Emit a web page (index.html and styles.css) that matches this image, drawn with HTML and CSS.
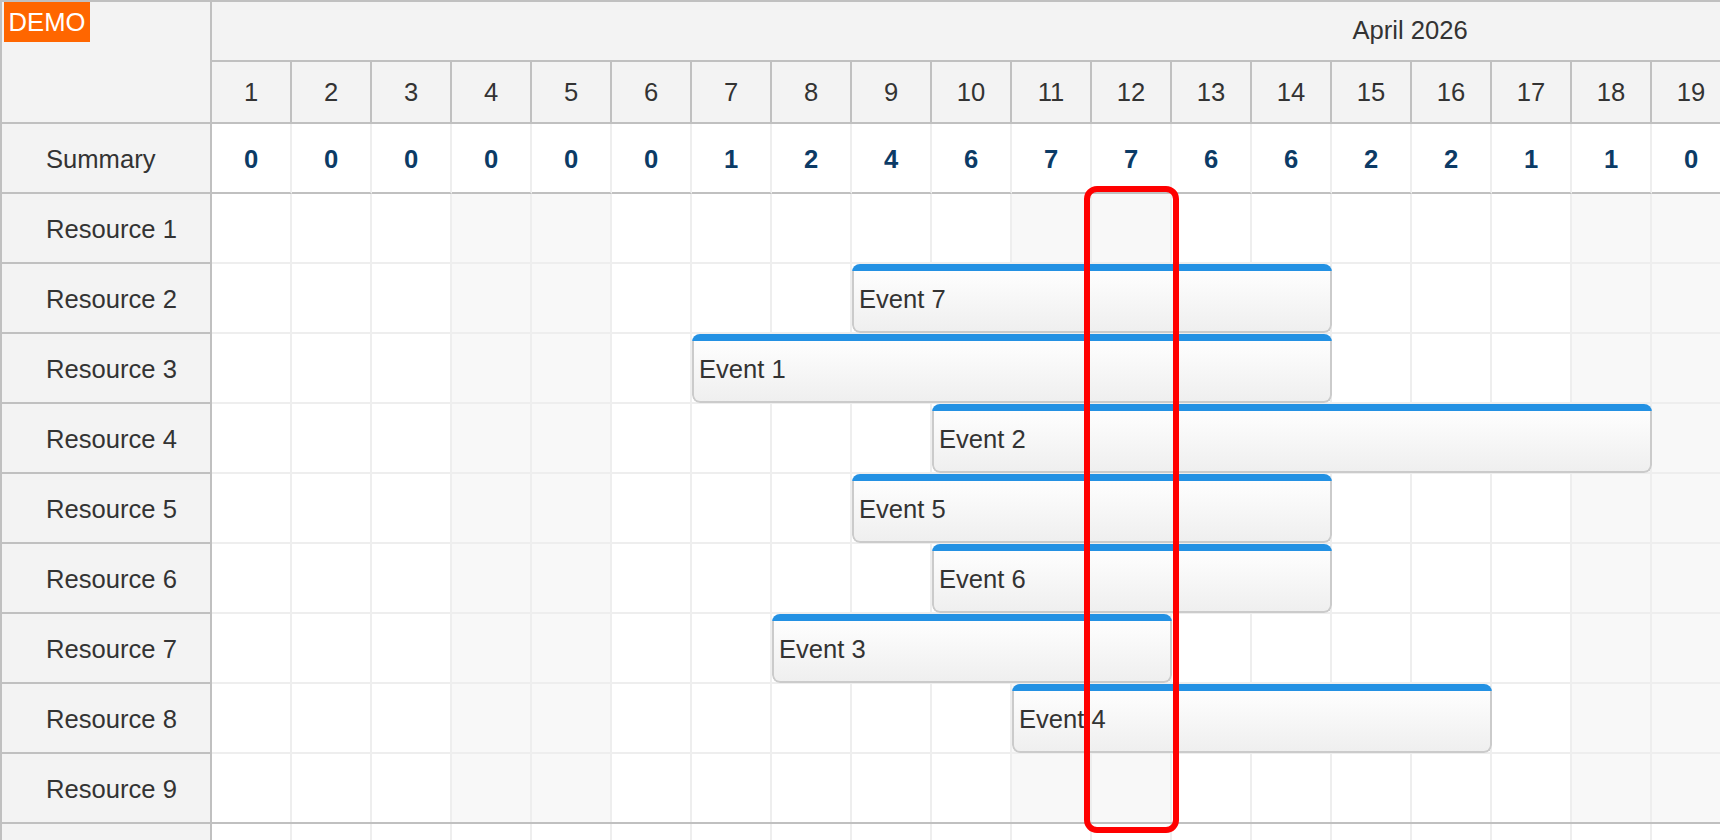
FILE: index.html
```html
<!DOCTYPE html>
<html>
<head>
<meta charset="utf-8">
<title>Scheduler</title>
<link rel="stylesheet" href="styles.css">
</head>
<body>
<div class="sched">
  <div class="row head">
    <div class="corner"></div>
    <div class="timehead">
      <div class="month">April 2026</div>
      <div class="days">
        <div class="day">1</div><div class="day">2</div><div class="day">3</div><div class="day">4</div><div class="day">5</div><div class="day">6</div><div class="day">7</div><div class="day">8</div><div class="day">9</div><div class="day">10</div><div class="day">11</div><div class="day">12</div><div class="day">13</div><div class="day">14</div><div class="day">15</div><div class="day">16</div><div class="day">17</div><div class="day">18</div><div class="day">19</div>
      </div>
    </div>
  </div>
  <div class="row">
    <div class="rh">Summary</div>
    <div class="sums">
      <div class="sum">0</div><div class="sum">0</div><div class="sum">0</div><div class="sum">0</div><div class="sum">0</div><div class="sum">0</div><div class="sum">1</div><div class="sum">2</div><div class="sum">4</div><div class="sum">6</div><div class="sum">7</div><div class="sum">7</div><div class="sum">6</div><div class="sum">6</div><div class="sum">2</div><div class="sum">2</div><div class="sum">1</div><div class="sum">1</div><div class="sum">0</div>
    </div>
  </div>
  <div class="row"><div class="rh">Resource 1</div><div class="lane"></div></div>
  <div class="row"><div class="rh">Resource 2</div><div class="lane"><div class="event d9-14"><div class="bar"></div><div class="body">Event 7</div></div></div></div>
  <div class="row"><div class="rh">Resource 3</div><div class="lane"><div class="event d7-14"><div class="bar"></div><div class="body">Event 1</div></div></div></div>
  <div class="row"><div class="rh">Resource 4</div><div class="lane"><div class="event d10-18"><div class="bar"></div><div class="body">Event 2</div></div></div></div>
  <div class="row"><div class="rh">Resource 5</div><div class="lane"><div class="event d9-14"><div class="bar"></div><div class="body">Event 5</div></div></div></div>
  <div class="row"><div class="rh">Resource 6</div><div class="lane"><div class="event d10-14"><div class="bar"></div><div class="body">Event 6</div></div></div></div>
  <div class="row"><div class="rh">Resource 7</div><div class="lane"><div class="event d8-12"><div class="bar"></div><div class="body">Event 3</div></div></div></div>
  <div class="row"><div class="rh">Resource 8</div><div class="lane"><div class="event d11-16"><div class="bar"></div><div class="body">Event 4</div></div></div></div>
  <div class="row last"><div class="rh">Resource 9</div><div class="lane"></div></div>
  <div class="row"><div class="rh"></div><div class="lane plain"></div></div>

  <div class="demo">DEMO</div>
  <div class="today"></div>
</div>
</body>
</html>
```

FILE: styles.css
```css
html, body {
  margin: 0;
  padding: 0;
  background: #fff;
}

body {
  font-family: "Liberation Sans", Arial, sans-serif;
  font-size: 25.6px;
  color: #333;
}

.sched {
  position: relative;
  width: 1720px;
  height: 840px;
  overflow: hidden;
  box-sizing: border-box;
  border-left: 2px solid #c0c0c0;
  border-top: 2px solid #c0c0c0;
}

.row {
  display: flex;
}

.row > * {
  flex-shrink: 0;
}

.corner {
  width: 210px;
  height: 122px;
  box-sizing: border-box;
  background: #f3f3f3;
  border-right: 2px solid #c0c0c0;
  border-bottom: 2px solid #c0c0c0;
}

.timehead {
  display: flex;
  flex-direction: column;
}

.month {
  width: 2400px;
  height: 60px;
  box-sizing: border-box;
  background: #f3f3f3;
  border-bottom: 2px solid #c0c0c0;
  display: flex;
  align-items: center;
  justify-content: center;
  padding-bottom: 2px;
  padding-right: 4px;
}

.days {
  display: flex;
}

.day {
  width: 80px;
  height: 62px;
  box-sizing: border-box;
  flex-shrink: 0;
  background: #f3f3f3;
  border-right: 2px solid #c0c0c0;
  border-bottom: 2px solid #c0c0c0;
  display: flex;
  align-items: center;
  justify-content: center;
}

.rh {
  width: 210px;
  height: 70px;
  box-sizing: border-box;
  background: #f3f3f3;
  border-right: 2px solid #c0c0c0;
  border-bottom: 2px solid #c0c0c0;
  display: flex;
  align-items: center;
  padding-left: 44px;
  padding-top: 2px;
}

.sums {
  display: flex;
}

.sum {
  width: 80px;
  height: 70px;
  box-sizing: border-box;
  flex-shrink: 0;
  background: #fff;
  border-right: 2px solid #eee;
  border-bottom: 2px solid #c0c0c0;
  display: flex;
  align-items: center;
  justify-content: center;
  padding-top: 2px;
  font-weight: bold;
  color: #0c3b66;
}

.lane {
  width: 2400px;
  height: 70px;
  box-sizing: border-box;
  border-bottom: 2px solid #eee;
  display: grid;
  grid-template-columns: repeat(30, 80px);
  grid-template-rows: 68px;
  background-color: #fff;
  background-image:
    repeating-linear-gradient(to right, transparent 0 78px, #eee 78px 80px),
    repeating-linear-gradient(to right, transparent 0 240px, #f8f8f8 240px 400px, transparent 400px 560px);
}

.lane.plain {
  background-image:
    repeating-linear-gradient(to right, transparent 0 78px, #eee 78px 80px);
}

.row.last .lane {
  border-bottom-color: #c0c0c0;
}

.event {
  grid-row: 1;
  align-self: start;
  display: flex;
  flex-direction: column;
  height: 69px;
  margin-bottom: -1px;
  border-radius: 8px;
  overflow: hidden;
}

.event .bar {
  height: 7px;
  flex-shrink: 0;
  background: #2391e3;
}

.event .body {
  flex: 1;
  box-sizing: border-box;
  background: linear-gradient(to bottom, #fefefe, #efefef);
  border: 2px solid #cbcbcb;
  border-top: none;
  border-radius: 0 0 8px 8px;
  display: flex;
  align-items: center;
  padding-left: 5px;
  padding-bottom: 4px;
  color: #333;
  white-space: nowrap;
}

.d9-14 { grid-column: 9 / 15; }
.d7-14 { grid-column: 7 / 15; }
.d10-18 { grid-column: 10 / 19; }
.d10-14 { grid-column: 10 / 15; }
.d8-12 { grid-column: 8 / 13; }
.d11-16 { grid-column: 11 / 17; }

.demo {
  position: absolute;
  left: 2px;
  top: 0;
  width: 86px;
  height: 40px;
  background: #ff6600;
  color: #fff;
  line-height: 40px;
  text-align: center;
}

.today {
  position: absolute;
  left: 1082px;
  top: 184px;
  width: 95px;
  height: 647px;
  box-sizing: border-box;
  border: 6px solid #ff0000;
  border-radius: 13px;
}
```
